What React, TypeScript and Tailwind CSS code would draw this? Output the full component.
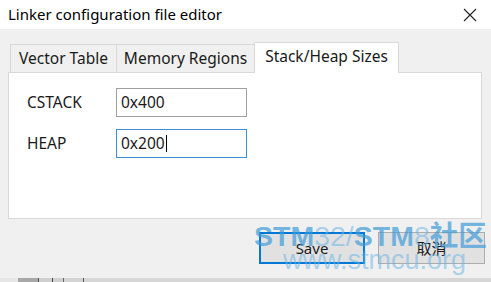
import React from "react";

const tabs = [
  { label: "Vector Table", w: "w-[107px]" },
  { label: "Memory Regions", w: "w-[139px]" },
];

const fields = [
  { label: "CSTACK", value: "0x400", focused: false },
  { label: "HEAP", value: "0x200", focused: true },
];

export default function App() {
  return (
    <div className="w-[491px] h-[282px] flex flex-col bg-[#f0f0f0] overflow-hidden font-['Noto_Sans','Noto_Sans_CJK_SC',sans-serif] text-[#1a1a1a] relative">
      {/* Title bar */}
      <div className="h-[29px] bg-white flex items-center justify-between pl-[8px] pr-[14px] shrink-0">
        <span className="text-[15px] leading-none text-black">Linker configuration file editor</span>
        <svg width="14" height="14" viewBox="0 0 14 14" className="text-[#222]">
          <path d="M1 1L13 13M13 1L1 13" stroke="currentColor" strokeWidth="1.1" fill="none" />
        </svg>
      </div>

      {/* Body */}
      <div className="flex-1 flex flex-col pt-[12px]">
        {/* Tab strip */}
        <div className="flex items-end pl-[10px] h-[31px] relative z-10">
          {tabs.map((t) => (
            <div
              key={t.label}
              className={`${t.w} h-[28px] border border-[#d9d9d9] border-b-0 -mr-px bg-[#f0f0f0] flex items-center justify-center text-[15.5px] text-[#1a1a1a]`}
            >
              {t.label}
            </div>
          ))}
          <div className="w-[145px] h-[31px] -mb-px border border-[#d9d9d9] border-b-0 bg-white flex items-center justify-center pb-[3px] text-[15.5px] text-[#1a1a1a]">
            Stack/Heap Sizes
          </div>
        </div>

        {/* Tab panel */}
        <div className="ml-[8px] w-[474px] h-[147px] bg-white border border-[#d9d9d9] flex flex-col gap-[12px] pt-[15px] pl-[18px]">
          {fields.map((f) => (
            <div key={f.label} className="flex items-center">
              <span className="w-[89px] text-[15.5px] text-[#1a1a1a]">{f.label}</span>
              <div
                className={`w-[131px] h-[29px] flex items-center pl-[4px] text-[15.5px] border ${
                  f.focused ? "border-[#3c8fd9]" : "border-[#a0a0a0]"
                }`}
              >
                {f.value}
                {f.focused && <span className="w-px h-[17px] bg-black ml-px" />}
              </div>
            </div>
          ))}
        </div>

        {/* Buttons */}
        <div className="flex justify-end gap-[13px] pr-[6px] pt-[13px]">
          <button className="w-[106px] h-[32px] bg-[#e1e1e1] border-2 border-[#0078d7] text-[15px] text-[#1a1a1a] flex items-center justify-center">
            Save
          </button>
          <button className="w-[107px] h-[32px] bg-[#e1e1e1] border border-[#adadad] text-[15px] text-[#1a1a1a] flex items-center justify-center">
            取消
          </button>
        </div>
      </div>

      {/* Taskbar sliver */}
      <div className="h-[4px] shrink-0 bg-[#d8d8d8] flex">
        <span className="w-[18px] bg-[#e6e6e6]" />
        <span className="w-[20px] bg-[#a8a8a8]" />
        <span className="w-px bg-[#555]" />
        <span className="w-[13px] bg-[#cfcfcf]" />
        <span className="w-px bg-[#444]" />
        <span className="w-[10px] bg-[#d0d0d0]" />
        <span className="w-px bg-[#666]" />
        <span className="w-[19px] bg-[#d4d4d4]" />
        <span className="w-px bg-[#555]" />
        <span className="flex-1 bg-[#d6d6d6]" />
      </div>

      {/* Watermark overlay */}
      <div className="absolute left-[254px] top-[221px] pointer-events-none font-['Liberation_Sans','Noto_Sans_CJK_SC',sans-serif] select-none">
        <div className="text-[28.5px] leading-[30px] font-bold whitespace-nowrap">
          <span className="text-[#3d9bd9]/70">STM</span>
          <span className="text-[#6db4e6]/55 font-normal">32/</span>
          <span className="text-[#3d9bd9]/70">STM</span>
          <span className="text-[#6db4e6]/55 font-normal">8</span>
          <span className="text-[#3d9bd9]/70">社区</span>
        </div>
        <div className="pl-[29px] -mt-[5px] text-[27px] leading-[28px] text-[#6db4e6]/55 whitespace-nowrap">
          www.stmcu.org
        </div>
      </div>
    </div>
  );
}
